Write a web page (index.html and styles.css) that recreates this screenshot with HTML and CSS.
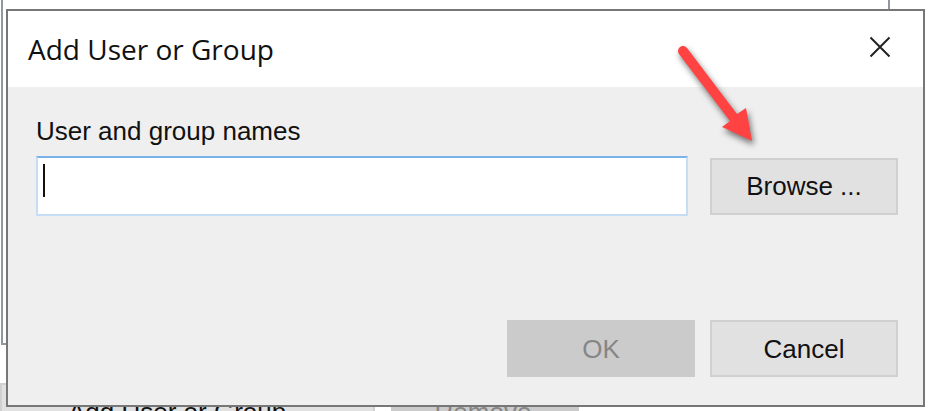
FILE: index.html
```html
<!DOCTYPE html>
<html lang="en">
<head>
<meta charset="utf-8">
<title>Add User or Group</title>
<link rel="stylesheet" href="styles.css">
</head>
<body>
<main class="policy">
  <div class="policy-list"></div>
  <div class="policy-actions">
    <button type="button" class="button button-add">Add User or Group</button>
    <button type="button" class="button button-off button-remove" disabled>Remove</button>
  </div>
</main>

<form class="dialog" role="dialog" aria-labelledby="dialog-title">
  <header class="titlebar">
    <h1 class="title" id="dialog-title">Add User or Group</h1>
    <button type="button" class="close" aria-label="Close">
      <svg class="close-icon" viewBox="0 0 22 22" aria-hidden="true"><path d="M1.500 1.500 20.500 20.500M20.500 1.500 1.500 20.500"/></svg>
    </button>
  </header>
  <div class="content">
    <label class="label" for="names">User and group names</label>
    <div class="row">
      <div class="field">
        <input class="input" id="names" type="text">
        <span class="caret"></span>
      </div>
      <button type="button" class="button">Browse ...</button>
    </div>
    <footer class="footer">
      <button type="submit" class="button button-off" disabled>OK</button>
      <button type="button" class="button">Cancel</button>
    </footer>
  </div>
  <svg class="arrow" viewBox="0 0 90 110" aria-hidden="true">
    <path d="M14 3 64 69 73 63 79 96 49 82 57 76 6 9A5 5 0 0 1 14 3z"/>
  </svg>
</form>
</body>
</html>
```
FILE: styles.css
```css
* {
  box-sizing: border-box;
}

body {
  margin: 0;
  height: 100vh;
  overflow: hidden;
  position: relative;
  background: #fff;
  color: #111;
  font: 26px/30px "Liberation Sans", Arial, sans-serif;
}

.policy {
  display: flex;
  flex-direction: column;
  gap: 38px;
}

.policy-list {
  height: 345px;
  margin: 0 40px 0 1px;
  border: 2px solid #9296a2;
  border-top: 0;
}

.policy-actions {
  display: flex;
  gap: 16px;
}

.button {
  width: 188px;
  height: 57px;
  flex: none;
  padding: 0;
  border: 2px solid #d0d0d0;
  border-radius: 0;
  background: #e1e1e1;
  color: #111;
  font: inherit;
}

.button-off {
  border-color: #cbcbcb;
  background: #cbcbcb;
  color: #868686;
}

.button-add {
  width: 375px;
  padding-left: 66px;
  text-align: left;
}

.button-remove {
  padding-right: 4px;
}

.dialog {
  position: absolute;
  inset: 9px 5px 4px 6px;
  display: flex;
  flex-direction: column;
  border: 2px solid #777;
  background: #efefef;
}

.titlebar {
  display: flex;
  align-items: center;
  justify-content: space-between;
  height: 76px;
  padding: 0 32px 0 20px;
  background: #fff;
}

.title {
  margin: 0;
  font: 28px/36px "Open Sans", "Noto Sans", sans-serif;
}

.close {
  display: flex;
  padding: 0 0 4px;
  border: 0;
  background: none;
}

.close-icon {
  width: 22px;
  height: 22px;
  fill: none;
  stroke: #222;
  stroke-width: 2;
}

.content {
  flex: 1;
  display: flex;
  flex-direction: column;
  padding: 29px 25px 28px 28px;
}

.label {
  margin-bottom: 10px;
}

.row,
.footer {
  display: flex;
  align-items: center;
  gap: 22px;
}

.footer {
  gap: 15px;
  justify-content: flex-end;
  margin-top: auto;
}

.field {
  flex: 1;
  display: flex;
  position: relative;
}

.input {
  width: 100%;
  height: 60px;
  padding: 0 8px;
  border: 2px solid #c5def5;
  border-top-color: #7ab3ea;
  border-radius: 0;
  outline: 0;
  background: #fff;
  font: inherit;
}

.caret {
  position: absolute;
  left: 7px;
  top: 8px;
  width: 2px;
  height: 33px;
  background: #111;
}

.arrow {
  position: absolute;
  top: 34px;
  right: 160px;
  width: 90px;
  height: 110px;
  overflow: visible;
  fill: #ff4343;
  filter: drop-shadow(2px 4px 3px #0008);
}
```
